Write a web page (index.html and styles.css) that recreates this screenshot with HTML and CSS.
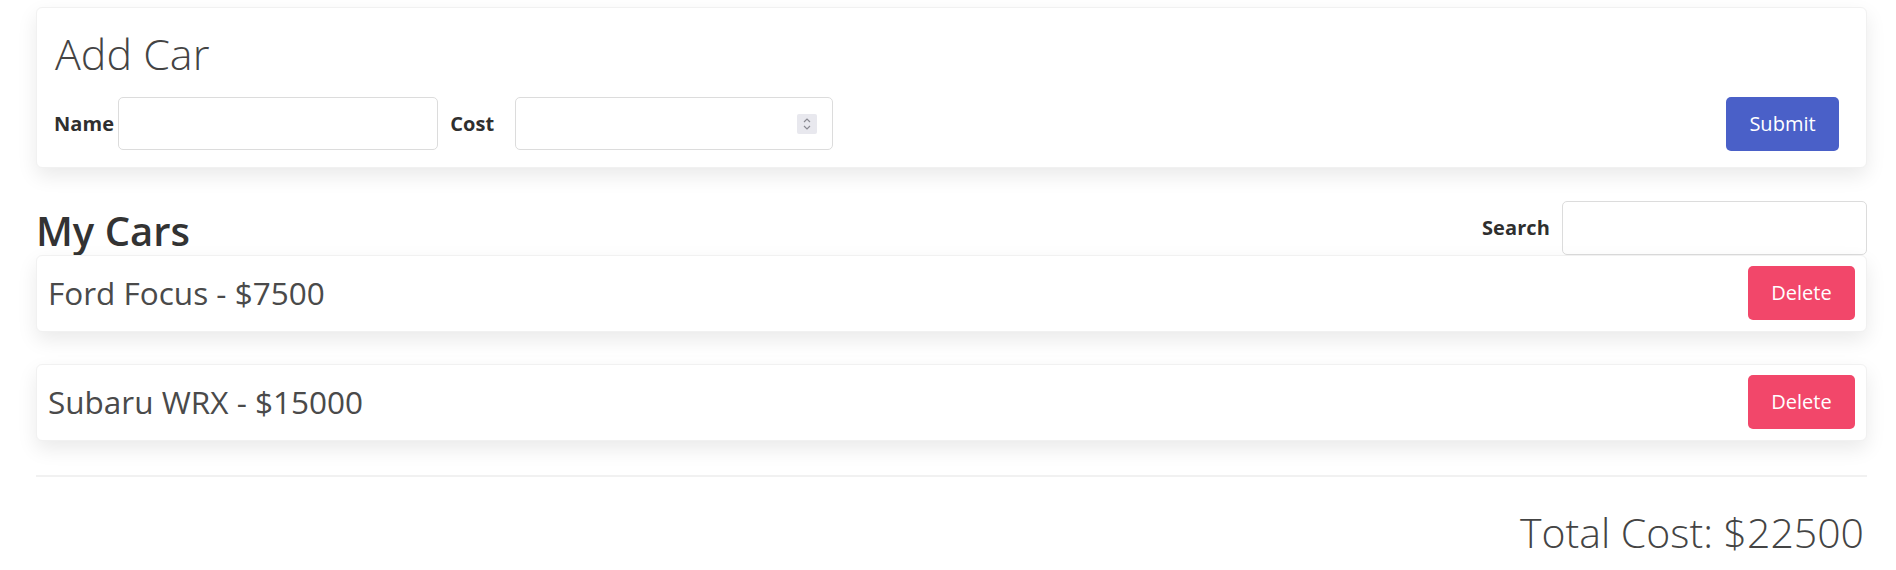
FILE: index.html
```html
<!DOCTYPE html>
<html lang="en">
<head>
<meta charset="utf-8">
<title>Cars</title>
<link rel="stylesheet" href="styles.css">
</head>
<body>
<div class="page">
  <section class="card add-card">
    <h1 class="title">Add Car</h1>
    <form class="add-form">
      <label class="lbl lbl-name" for="name">Name</label>
      <input class="field field-name" id="name" type="text">
      <label class="lbl lbl-cost" for="cost">Cost</label>
      <div class="field field-cost">
        <input class="num" id="cost" type="text">
        <span class="spin">
          <svg width="20" height="20" viewBox="0 0 20 20"><path d="M7 8 L10 5 L13 8" fill="none" stroke="#8a8a92" stroke-width="1.2"/><path d="M7 12 L10 15 L13 12" fill="none" stroke="#8a8a92" stroke-width="1.2"/></svg>
        </span>
      </div>
      <button class="btn btn-primary" type="button">Submit</button>
    </form>
  </section>

  <div class="list-head">
    <h2 class="list-title">My Cars</h2>
    <div class="search">
      <label class="lbl" for="search">Search</label>
      <input class="field field-search" id="search" type="text">
    </div>
  </div>

  <ul class="car-list">
    <li class="card car">
      <span class="car-name">Ford Focus - $7500</span>
      <button class="btn btn-danger" type="button">Delete</button>
    </li>
    <li class="card car">
      <span class="car-name">Subaru WRX - $15000</span>
      <button class="btn btn-danger" type="button">Delete</button>
    </li>
  </ul>

  <hr class="divider">
  <div class="total">Total Cost: $22500</div>
</div>
</body>
</html>
```

FILE: styles.css
```css
* { box-sizing: border-box; }

html, body {
  margin: 0;
  background: #ffffff;
}

body {
  font-family: "Open Sans", "Noto Sans", sans-serif;
  color: #333;
}

.page {
  padding: 7px 29px 0 36px;
}

.card {
  background: #fff;
  border: 1px solid #f1f1f1;
  border-radius: 6px;
  box-shadow: 0 8px 20px rgba(0, 0, 0, 0.085);
}

.add-card {
  padding: 20px 27px 16px 17px;
}

.title {
  margin: 0 0 17px 1px;
  font-size: 43px;
  line-height: 1.2;
  font-weight: 300;
  color: #444;
}

.add-form {
  display: flex;
  align-items: center;
}

.lbl {
  font-size: 20px;
  font-weight: 700;
  color: #2f2f2f;
  letter-spacing: 0.1px;
}

.lbl-name { margin-right: 4px; }
.lbl-cost { margin-left: 12px; margin-right: 21px; }

.field {
  height: 53px;
  border: 1px solid #dcdcdc;
  border-radius: 5px;
  background: #fff;
  font-family: inherit;
  font-size: 20px;
  color: #444;
  padding: 0 14px;
  outline: none;
}

.field-name { width: 320px; }

.field-cost {
  width: 318px;
  display: flex;
  align-items: center;
  padding: 0 15px 0 14px;
}

.num {
  flex: 1;
  min-width: 0;
  border: 0;
  outline: none;
  font-family: inherit;
  font-size: 20px;
  background: transparent;
}

.spin {
  display: flex;
  width: 20px;
  height: 20px;
  background: #e8e8ee;
  border-radius: 2px;
}

.btn {
  font-family: inherit;
  font-size: 20px;
  line-height: 30px;
  font-weight: 400;
  color: #fff;
  border: 0;
  border-radius: 5px;
  padding: 12px 23px;
  cursor: pointer;
}

.btn-primary {
  background: #4a60c8;
  margin-left: auto;
  width: 113px;
}

.btn-danger {
  background: #f2476a;
  width: 107px;
  padding-left: 0;
  padding-right: 0;
}

.list-head {
  display: flex;
  align-items: flex-end;
  justify-content: space-between;
  margin-top: 33px;
}

.list-title {
  margin: 0;
  font-size: 40px;
  line-height: 48px;
  font-weight: 600;
  color: #333;
}

.search {
  display: flex;
  align-items: center;
  gap: 12px;
}

.field-search {
  width: 305px;
  height: 54px;
}

.car-list {
  list-style: none;
  margin: 0;
  padding: 0;
  display: flex;
  flex-direction: column;
  gap: 32px;
}

.car {
  display: flex;
  align-items: center;
  justify-content: space-between;
  padding: 10.5px 11px;
}

.car-name {
  font-size: 31.5px;
  font-weight: 400;
  letter-spacing: 0;
  color: #4a4a4a;
  line-height: 1.2;
}

.divider {
  margin: 34px 0 0 0;
  border: 0;
  border-top: 2px solid #f1f1f1;
}

.total {
  margin-top: 31px;
  text-align: right;
  font-size: 41px;
  line-height: 1.2;
  font-weight: 300;
  color: #444;
  padding-right: 3px;
}
```
